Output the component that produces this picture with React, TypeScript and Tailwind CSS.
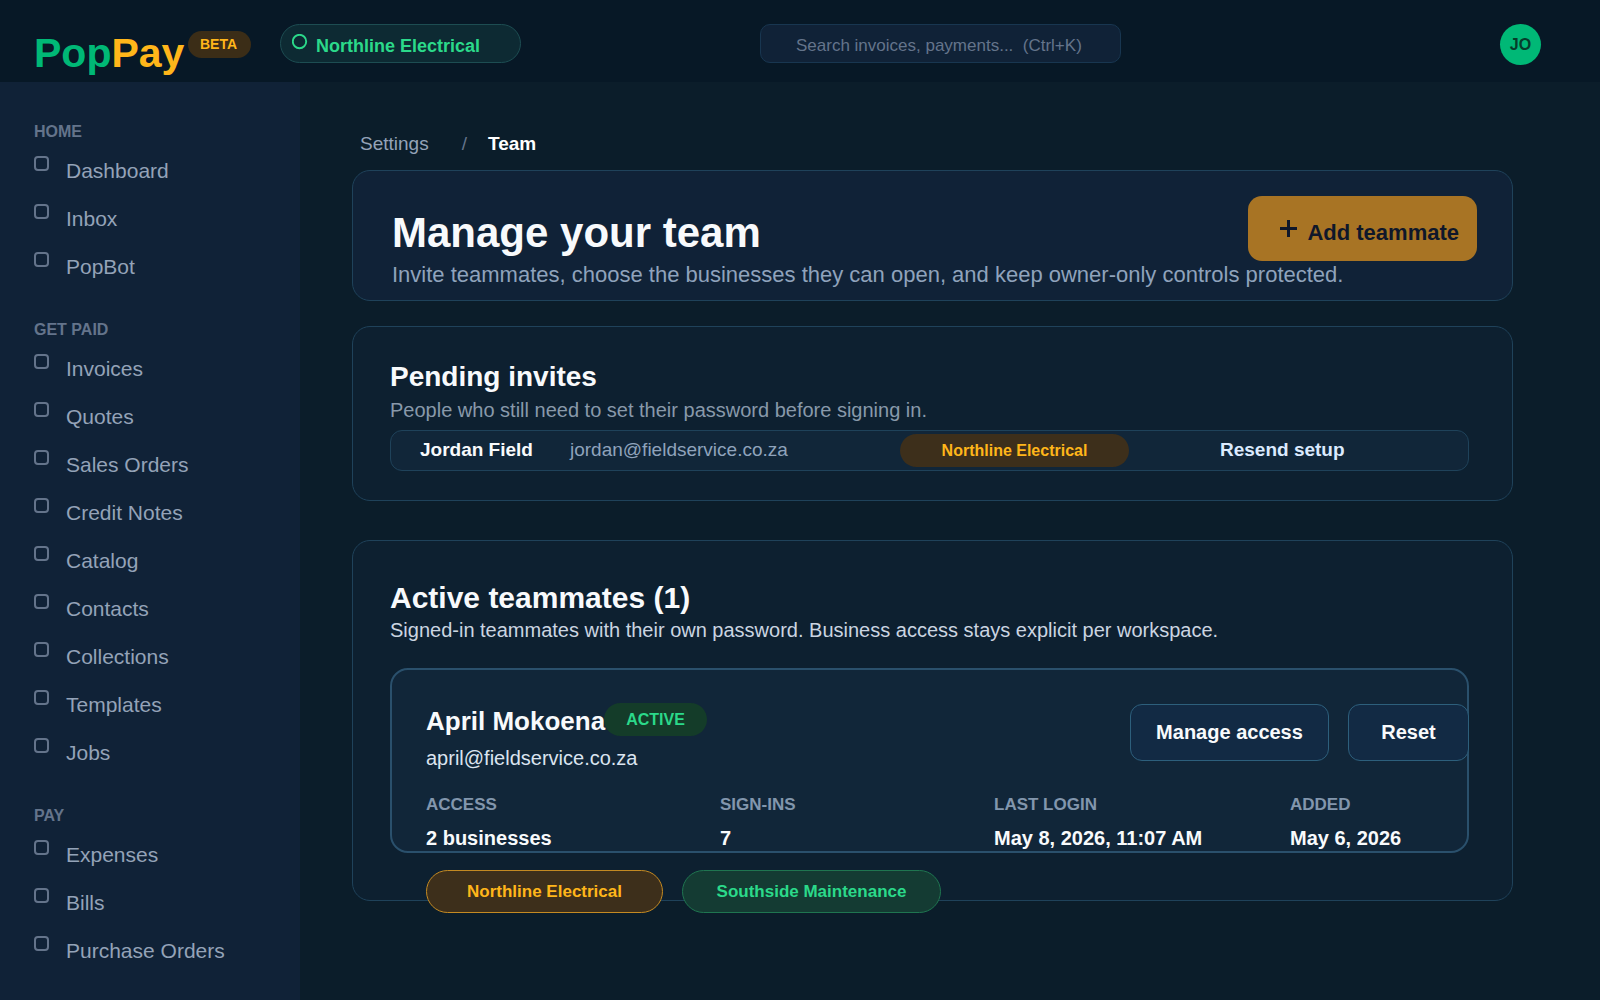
import React from "react";

const navGroups = [
  { title: "HOME", items: ["Dashboard", "Inbox", "PopBot"] },
  {
    title: "GET PAID",
    items: [
      "Invoices",
      "Quotes",
      "Sales Orders",
      "Credit Notes",
      "Catalog",
      "Contacts",
      "Collections",
      "Templates",
      "Jobs",
    ],
  },
  { title: "PAY", items: ["Expenses", "Bills", "Purchase Orders"] },
];

const memberStats = [
  { label: "ACCESS", value: "2 businesses" },
  { label: "SIGN-INS", value: "7" },
  { label: "LAST LOGIN", value: "May 8, 2026, 11:07 AM" },
  { label: "ADDED", value: "May 6, 2026" },
];

function Header() {
  return (
    <header className="flex h-[82px] items-start bg-[#071826] pt-6 pl-[34px] pr-[59px]">
      <a href="#" className="flex w-[154px] shrink-0 text-[41px] leading-[58px] font-bold">
        <span className="text-[#00b876]">Pop</span>
        <span className="text-[#ffb61a]">Pay</span>
      </a>
      <span className="mt-[7px] w-[63px] shrink-0 rounded-full bg-[#3b2d17] pl-3 text-[14px] leading-[27px] font-bold text-[#ffb61a]">
        BETA
      </span>
      <button
        type="button"
        className="ml-[29px] flex h-[39px] w-[241px] shrink-0 items-start gap-2 rounded-full border border-[#1d4d52] bg-[#0d2a33] pl-[11px] text-[18px] leading-[43px] font-bold text-[#2bd98a]"
      >
        <svg className="mt-[9px] h-4 w-4" viewBox="0 0 16 16" fill="none" aria-hidden="true">
          <circle cx="7.5" cy="7.5" r="6.7" stroke="currentColor" strokeWidth="1.9" />
        </svg>
        Northline Electrical
      </button>
      <input
        type="search"
        aria-label="Search"
        placeholder={"Search invoices, payments...\u00a0 (Ctrl+K)"}
        className="ml-[239px] h-[39px] w-[361px] rounded-[10px] border border-[#183650] bg-[#102237] pt-1 pr-3 pl-[35px] text-[17px] text-[#f8fafc] placeholder:text-[#64748b] placeholder:opacity-100"
      />
      <button
        type="button"
        aria-label="Account"
        className="ml-auto h-[41px] w-[41px] shrink-0 rounded-full bg-[#00b876] text-[16px] leading-[41px] font-bold text-[#063c2a]"
      >
        JO
      </button>
    </header>
  );
}

function Sidebar() {
  return (
    <nav className="w-[300px] shrink-0 bg-[#102237] pt-2.5 pl-[34px]">
      {navGroups.map((group) => (
        <div key={group.title}>
          <h2 className="pt-[26px] text-[16px] leading-[28px] font-bold text-[#64748b]">{group.title}</h2>
          {group.items.map((item) => (
            <a key={item} href="#" className="flex h-12 items-start gap-[17px] text-[21px] leading-[50px] text-[#94a3b8]">
              <span className="mt-2.5 h-[15px] w-[15px] rounded-[4px] border-2 border-[#64748b]" />
              {item}
            </a>
          ))}
        </div>
      ))}
    </nav>
  );
}

function PendingInvites() {
  return (
    <section className="mt-[25px] rounded-[18px] border border-[#1f425a] bg-[#0d2030] pt-8 pr-[43px] pb-[29px] pl-[37px]">
      <h2 className="text-[28px] leading-[36px] font-bold text-[#f8fafc]">Pending invites</h2>
      <p className="text-[20px] leading-[30px] text-[#8899aa]">
        People who still need to set their password before signing in.
      </p>
      <div className="mt-[5px] grid h-[41px] grid-cols-[150fr_330fr_320fr_248fr] items-start rounded-[12px] border border-[#1f425a] bg-[#112639] pl-[29px] text-[19px] leading-[37px]">
        <span className="font-bold text-[#f8fafc]">Jordan Field</span>
        <span className="text-[#8fa3bc]">jordan@fieldservice.co.za</span>
        <span className="mt-[3px] w-[229px] rounded-full bg-[#3d2f1b] text-center text-[16px] leading-[33px] font-bold text-[#ffb61a]">
          Northline Electrical
        </span>
        <button type="button" className="text-left font-bold text-[#dbeafe]">
          Resend setup
        </button>
      </div>
    </section>
  );
}

function ActiveTeammates() {
  return (
    <section className="mt-[39px] rounded-[18px] border border-[#1f425a] bg-[#0d2030] pt-[37px] pr-[43px] pl-[37px]">
      <h2 className="text-[30px] leading-[40px] font-bold text-[#f8fafc]">Active teammates (1)</h2>
      <p className="text-[20px] leading-[24px] text-[#cbd5e1]">
        Signed-in teammates with their own password. Business access stays explicit per workspace.
      </p>

      {/* Member card */}
      <div className="mt-[26px] rounded-[18px] border-2 border-[#2a506c] bg-[#112639] pt-[33px] pl-[34px]">
        <div className="flex justify-between">
          <div>
            <div className="flex items-start">
              <h3 className="text-[26px] leading-[36px] font-bold text-[#f8fafc]">April Mokoena</h3>
              <span className="-ml-px rounded-full bg-[#143c29] px-[22px] text-[16px] leading-[33px] font-bold text-[#2bd98a]">
                ACTIVE
              </span>
            </div>
            <p className="text-[20px] leading-[38px] text-[#dbe4f0]">april@fieldservice.co.za</p>
          </div>
          <div className="-mr-0.5 mt-px flex items-start gap-[19px] text-[20px] leading-[30px] font-bold text-[#f8fafc]">
            <button type="button" className="h-[57px] w-[199px] rounded-[12px] border border-[#2d5f7c] bg-[#122a44] pb-0.5">
              Manage access
            </button>
            <button type="button" className="h-[57px] w-[121px] rounded-[12px] border border-[#2d5f7c] bg-[#122a44] pb-0.5">
              Reset
            </button>
          </div>
        </div>
        <dl className="mt-4 grid grid-cols-[294fr_274fr_296fr_177fr] font-bold">
          {memberStats.map((stat) => (
            <div key={stat.label}>
              <dt className="text-[17px] leading-[24px] text-[#8296ad]">{stat.label}</dt>
              <dd className="mt-2 text-[20px] leading-[26px] text-[#f8fafc]">{stat.value}</dd>
            </div>
          ))}
        </dl>
      </div>

      {/* Business access */}
      <div className="mt-[17px] -mb-[13px] flex gap-[19px] pl-9 text-center text-[17px] leading-[41px] font-bold">
        <span className="w-[237px] rounded-full border border-[#c48a22] bg-[#3d2f1b] text-[#ffb61a]">
          Northline Electrical
        </span>
        <span className="w-[259px] rounded-full border border-[#1f7550] bg-[#143b33] text-[#2bd98a]">
          Southside Maintenance
        </span>
      </div>
    </section>
  );
}

export default function App() {
  return (
    <div className="flex min-h-screen flex-col bg-[#0b1d2a] font-['Liberation_Sans',Arial,sans-serif]">
      <Header />
      <div className="flex flex-1">
        <Sidebar />
        <main className="min-w-0 flex-1 pt-[45px] pr-[87px] pb-10 pl-[52px]">
          <div className="mb-[9px] flex pl-2 text-[19px] leading-[34px]">
            <a href="#" className="text-[#94a3b8]">Settings</a>
            <span className="ml-[33px] text-[#64748b]">/</span>
            <span className="ml-[21px] font-bold text-white">Team</span>
          </div>

          <section className="rounded-[18px] border border-[#1f425a] bg-[#102237] pt-[25px] pr-[35px] pb-[7px] pl-[39px]">
            <div className="flex items-start justify-between">
              <h1 className="mt-3 text-[42px] leading-[50px] font-bold text-[#f8fafc]">Manage your team</h1>
              <button
                type="button"
                className="-mb-[5px] flex h-[65px] items-start gap-2.5 rounded-[14px] bg-[#a87424] pr-[18px] pl-8 text-[22px] leading-[74px] font-bold text-[#0f172a]"
              >
                <svg className="mt-6 h-[17px] w-[17px]" viewBox="0 0 17 17" aria-hidden="true">
                  <path d="M8.5 0v17M0 8.5h17" stroke="currentColor" strokeWidth="3" />
                </svg>
                Add teammate
              </button>
            </div>
            <p className="-mt-0.5 text-[22px] leading-[37px] text-[#8fa3bc]">
              Invite teammates, choose the businesses they can open, and keep owner-only controls protected.
            </p>
          </section>

          <PendingInvites />
          <ActiveTeammates />
        </main>
      </div>
    </div>
  );
}
